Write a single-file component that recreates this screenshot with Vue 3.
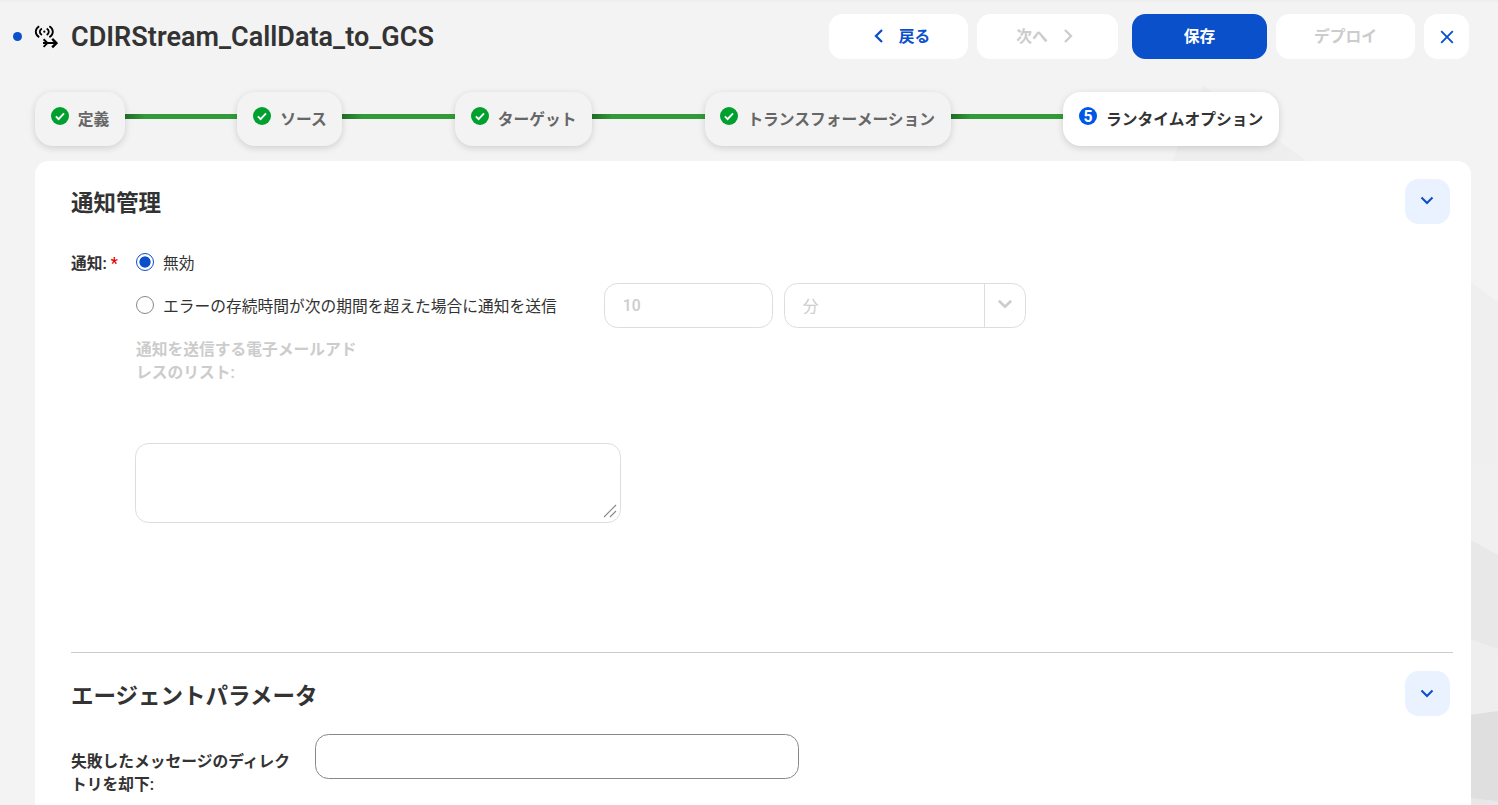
<template>
  <div class="page">
    <svg class="backdrop" viewBox="0 0 1498 805" aria-hidden="true">
      <defs>
        <linearGradient id="facet" x1="0" y1="0" x2="0" y2="1">
          <stop offset="0" stop-color="#eeeeee" />
          <stop offset="1" stop-color="#f1f1f1" />
        </linearGradient>
      </defs>
      <path d="M1203 85L1498 302V805H1100V340z" fill="url(#facet)" />
      <path d="M1440 523L1498 555V805H1440z" fill="#e8e8e8" />
      <path d="M1440 628L1498 649V805H1440z" fill="#eeeeee" />
      <path d="M1440 719L1498 711V805H1440z" fill="#dfdfdf" />
      <path d="M1440 795L1498 801V805H1440z" fill="#e8e8e8" />
    </svg>

    <!-- Header -->
    <header class="header">
      <span class="unsaved-dot"></span>
      <svg class="stream-icon" viewBox="0 0 24 24" fill="none" stroke="#000" stroke-width="1.8">
        <path d="M5.2 1.2C.6 4 .6 9.4 5.2 12.2M15.4 1.2c4.6 2.8 4.6 8.2 0 11" />
        <path d="M7.9 3.4c-2.8 1.8-2.8 4.8 0 6.6M12.7 3.4c2.8 1.8 2.8 4.8 0 6.6" />
        <circle cx="10.3" cy="6.7" r="1.1" fill="#000" stroke="none" />
        <path d="M9.6 14.3l3.8 3.8-3.8 3.8M9 18.1h13" stroke-width="2" />
        <path d="M18.2 13.8l4.2 4.3-4.2 4.3" stroke-width="2.4" />
      </svg>
      <h1 class="title">CDIRStream_CallData_to_GCS</h1>
      <div class="actions">
        <button class="btn btn-back">
          <svg class="chevron" viewBox="0 0 10 16"><path d="M8 2L2 8l6 6" /></svg>
          <span>戻る</span>
        </button>
        <button class="btn btn-next" disabled>
          <span>次へ</span>
          <svg class="chevron" viewBox="0 0 10 16"><path d="M2 2l6 6-6 6" /></svg>
        </button>
        <button class="btn btn-save">保存</button>
        <button class="btn btn-deploy" disabled>デプロイ</button>
        <button class="btn btn-close">
          <svg viewBox="0 0 14 14"><path d="M1.2 1.2l11.6 11.6M12.8 1.2L1.2 12.8" /></svg>
        </button>
      </div>
    </header>

    <!-- Wizard steps -->
    <nav class="steps">
      <template v-for="(step, index) in steps" :key="step.label">
        <span v-if="index > 0" class="connector"></span>
        <div class="step" :class="{ active: index === currentStep }">
          <span v-if="index === currentStep" class="step-number">{{ index + 1 }}</span>
          <svg v-else class="step-check" viewBox="0 0 18 18">
            <circle cx="9" cy="9" r="9" fill="#00a02f" />
            <path d="M4.9 9.3l2.7 2.8 5.4-5.8" fill="none" stroke="#fff" stroke-width="1.9" />
          </svg>
          <span class="step-label">{{ step.label }}</span>
        </div>
      </template>
    </nav>

    <main class="panel">
      <!-- Notification management -->
      <section class="section section-notify">
        <div class="section-head">
          <h2>通知管理</h2>
          <button class="toggle">
            <svg viewBox="0 0 14 9"><path d="M1.5 1.5L7 7l5.5-5.5" /></svg>
          </button>
        </div>
        <div class="notify">
          <div class="field-label notify-label">通知: <span class="required">*</span></div>
          <div class="notify-fields">
            <label class="radio-row first">
              <input v-model="notify" type="radio" value="off">
              <span>無効</span>
            </label>
            <div class="threshold-row">
              <label class="radio-row">
                <input v-model="notify" type="radio" value="error">
                <span>エラーの存続時間が次の期間を超えた場合に通知を送信</span>
              </label>
              <input v-model="threshold" class="input threshold" type="text" :disabled="notify === 'off'">
              <div class="select">
                <span class="select-value">分</span>
                <span class="select-arrow">
                  <svg viewBox="0 0 16 10"><path d="M1.8 1.8L8 7.8l6.2-6" /></svg>
                </span>
              </div>
            </div>
            <div class="mail-label">通知を送信する電子メールアド<br>レスのリスト:</div>
            <div class="textarea">
              <svg viewBox="0 0 14 14"><path d="M1 13L13 1M7 13l6-6" /></svg>
            </div>
          </div>
        </div>
      </section>

      <!-- Agent parameters -->
      <section class="section section-agent">
        <div class="section-head">
          <h2>エージェントパラメータ</h2>
          <button class="toggle">
            <svg viewBox="0 0 14 9"><path d="M1.5 1.5L7 7l5.5-5.5" /></svg>
          </button>
        </div>
        <div class="agent-row">
          <div class="field-label agent-label">失敗したメッセージのディレク<br>トリを却下:</div>
          <input v-model="rejectDirectory" class="input directory" type="text">
        </div>
      </section>
    </main>
  </div>
</template>

<script setup>
import { ref } from 'vue'

const steps = [
  { label: '定義' },
  { label: 'ソース' },
  { label: 'ターゲット' },
  { label: 'トランスフォーメーション' },
  { label: 'ランタイムオプション' }
]

const currentStep = ref(4)
const notify = ref('off')
const threshold = ref('10')
const rejectDirectory = ref('')
</script>

<style>
body {
  margin: 0;
  overflow: hidden;
}
</style>

<style scoped>
.page {
  position: relative;
  height: 805px;
  overflow: hidden;
  display: flex;
  flex-direction: column;
  background: linear-gradient(#ececec, #f3f3f3 3px);
  color: #333;
  font-family: Roboto, "Noto Sans CJK JP", sans-serif;
  font-size: 15.75px;
}

.page *,
.page {
  box-sizing: border-box;
}

.backdrop {
  position: absolute;
  inset: 0;
  width: 1498px;
  height: 805px;
}

button,
input {
  font: inherit;
  margin: 0;
}

/* Header */
.header {
  position: relative;
  display: flex;
  align-items: center;
  height: 45px;
  flex: none;
  margin-top: 14px;
  padding: 0 29px 0 13px;
}

.unsaved-dot {
  width: 9px;
  height: 9px;
  border-radius: 50%;
  background: #0b50cb;
}

.stream-icon {
  width: 24px;
  height: 24px;
  margin: 1px 13px 0 12px;
}

.title {
  margin: 0;
  font-size: 27px;
  font-weight: 600;
  letter-spacing: 0.03px;
  line-height: 45px;
  padding-top: 2px;
}

.actions {
  display: flex;
  margin-left: auto;
}

.btn {
  display: flex;
  align-items: center;
  justify-content: center;
  height: 45px;
  padding: 0;
  border: 0;
  border-radius: 13.5px;
  background: #fff;
  color: #0b50cb;
  font-weight: 700;
  line-height: 23px;
}

.btn svg {
  fill: none;
  stroke: currentColor;
  stroke-width: 2.3;
}

.btn:disabled {
  color: #ccc;
}

.chevron {
  width: 10px;
  height: 16px;
  margin-bottom: 1px;
}

.btn-back {
  width: 139px;
  gap: 15px;
  padding-left: 7px;
}

.btn-next {
  width: 141px;
  gap: 15px;
  margin-left: 9px;
  padding-right: 6px;
}

.btn-save {
  width: 135px;
  margin-left: 14px;
  background: #0b50cb;
  color: #fff;
}

.btn-deploy {
  width: 139px;
  margin-left: 9px;
}

.btn-close {
  width: 45px;
  margin-left: 9px;
}

.btn-close svg {
  width: 14px;
  height: 14px;
  stroke-width: 1.9;
}

/* Steps */
.steps {
  position: relative;
  display: flex;
  align-items: center;
  width: 1244px;
  height: 54px;
  flex: none;
  margin: 33px 0 0 35px;
}

.step {
  display: flex;
  flex: none;
  height: 54px;
  padding: 15px 15.75px 0;
  border-radius: 18px;
  background: #f3f3f3;
  box-shadow: 0 2px 7px rgba(0, 0, 0, 0.15);
  color: #666;
  font-weight: 600;
  white-space: nowrap;
}

.step.active {
  background: #fff;
  color: #333;
}

.step-check,
.step-number {
  flex: none;
  width: 18px;
  height: 18px;
  margin-right: 9px;
}

.step-number {
  border-radius: 50%;
  background: #0057e7;
  color: #fff;
  font-weight: 700;
  line-height: 19px;
  text-align: center;
}

.step-label {
  line-height: 25px;
}

.connector {
  flex: 1;
  height: 5px;
  margin-bottom: 5px;
  background: linear-gradient(90deg, #1f6b24, #339a3a 20px);
}

/* Panel */
.panel {
  position: relative;
  width: 1436px;
  flex: 1;
  margin: 15px 0 0 35px;
  padding: 0 18px 0 36px;
  border-radius: 13.5px 13.5px 0 0;
  background: #fff;
}

.section-notify {
  height: 492px;
  padding-top: 18px;
  border-bottom: 1px solid #ccc;
}

.section-agent {
  padding-top: 18px;
}

.section-head {
  display: flex;
  justify-content: space-between;
  height: 45px;
  padding-right: 3px;
}

.section-head h2 {
  margin: 0;
  font-size: 22.5px;
  font-weight: 600;
  line-height: 49px;
}

.section-agent h2 {
  line-height: 51px;
}

.toggle {
  display: flex;
  align-items: center;
  justify-content: center;
  width: 45px;
  height: 45px;
  padding: 0 1px 2px 0;
  border: 0;
  border-radius: 13.5px;
  background: #ebf2ff;
}

.section-agent .toggle {
  padding-bottom: 1px;
}

.toggle svg {
  width: 14px;
  height: 9px;
  fill: none;
  stroke: #0b50cb;
  stroke-width: 2.1;
}

.field-label {
  font-weight: 600;
  line-height: 23px;
}

.notify {
  display: flex;
  padding-top: 27px;
}

.notify-label {
  width: 64px;
  padding-top: 1px;
  white-space: nowrap;
}

.required {
  color: #e60000;
}

.radio-row {
  display: flex;
  align-items: center;
  line-height: 23px;
  white-space: nowrap;
}

.radio-row.first {
  height: 23px;
}

.radio-row span {
  padding-top: 2px;
}

.radio-row input {
  appearance: none;
  width: 18px;
  height: 18px;
  margin: 0 9px 2px 1px;
  border: 1px solid #888;
  border-radius: 50%;
  background: #fff;
}

.radio-row input:checked {
  border-color: #0b50cb;
  background: radial-gradient(circle, #0b50cb 5.2px, #fff 6px);
}

.threshold-row {
  display: flex;
  align-items: center;
  height: 45px;
  margin-top: 9px;
}

.input {
  height: 45px;
  padding: 0 18px;
  border: 1px solid #888;
  border-radius: 13.5px;
  background: #fff;
  outline: none;
}

.threshold {
  width: 169px;
  margin-left: 47px;
}

.threshold:disabled {
  border-color: #ddd;
  color: #ccc;
  font-weight: 500;
}

.select {
  display: flex;
  width: 242px;
  height: 45px;
  margin-left: 11px;
  border: 1px solid #ddd;
  border-radius: 13.5px;
  color: #ccc;
}

.select-value {
  flex: 1;
  padding-left: 18px;
  line-height: 46px;
}

.select-arrow {
  display: flex;
  align-items: center;
  justify-content: center;
  width: 41px;
  padding-bottom: 3px;
  border-left: 1px solid #ddd;
}

.select-arrow svg {
  width: 16px;
  height: 10px;
  fill: none;
  stroke: #ccc;
  stroke-width: 2.6;
}

.mail-label {
  margin: 10px 0 0 1px;
  color: #ccc;
  font-weight: 600;
  line-height: 23px;
}

.textarea {
  display: flex;
  align-items: flex-end;
  justify-content: flex-end;
  width: 486px;
  height: 80px;
  margin-top: 59px;
  padding: 3px 3px 4px;
  border: 1px solid #ddd;
  border-radius: 13.5px;
}

.textarea svg {
  width: 14px;
  height: 14px;
  fill: none;
  stroke: #888;
  stroke-width: 1.1;
}

.agent-row {
  display: flex;
  padding-top: 18px;
}

.agent-label {
  width: 244px;
  padding-top: 16px;
}

.directory {
  width: 484px;
}
</style>
